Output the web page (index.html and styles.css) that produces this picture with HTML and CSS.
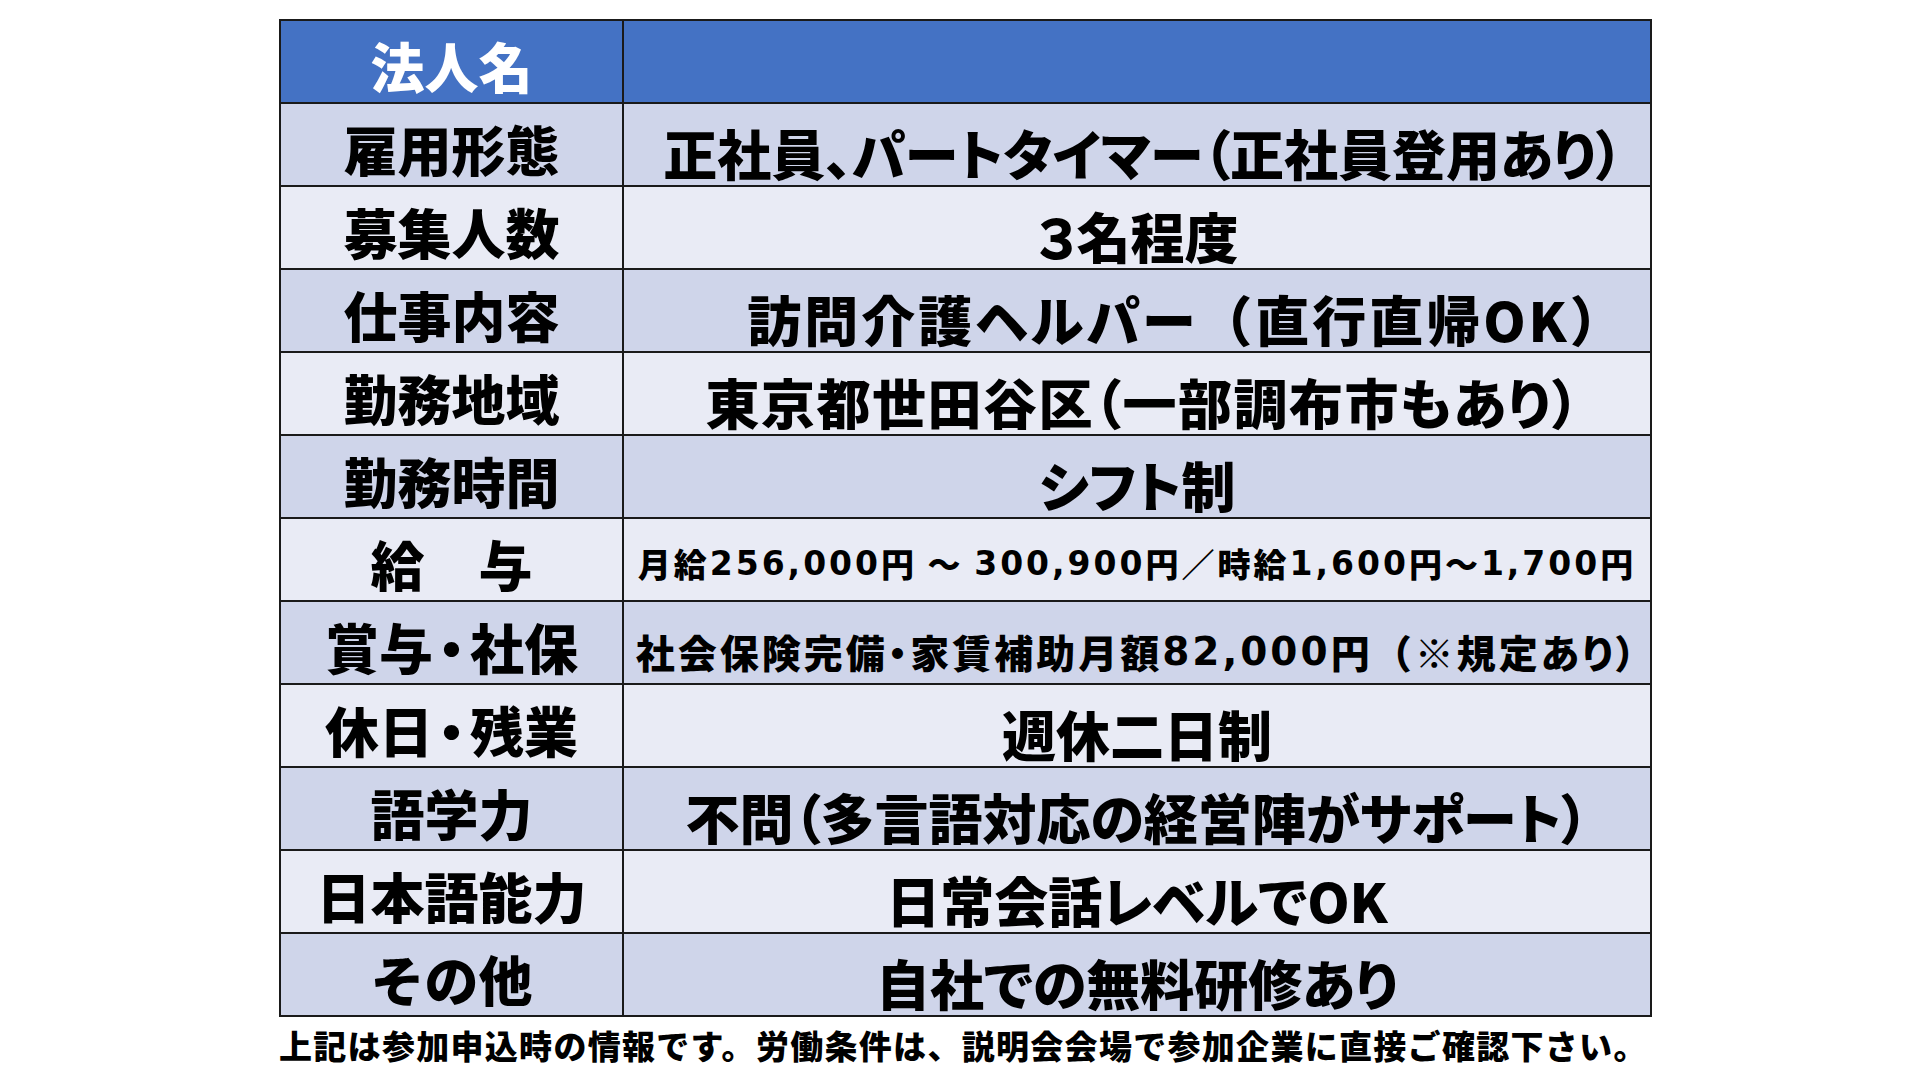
FILE: index.html
```html
<!DOCTYPE html>
<html lang="ja">
<head>
<meta charset="utf-8">
<title>募集要項</title>
<link rel="stylesheet" href="styles.css">
</head>
<body>
<main class="sheet">
  <div class="grid">
    <div class="cell head key">法人名</div>
    <div class="cell head val"></div>

    <div class="cell odd key">雇用形態</div>
    <div class="cell odd val nudge">正社員、パートタイマー（正社員登用あり）</div>

    <div class="cell even key">募集人数</div>
    <div class="cell even val">３名程度</div>

    <div class="cell odd key">仕事内容</div>
    <div class="cell odd val wide">訪問介護ヘルパー<span class="fw">（</span>直行直帰OK<span class="fw">）</span></div>

    <div class="cell even key">勤務地域</div>
    <div class="cell even val loose">東京都世田谷区（一部調布市もあり）</div>

    <div class="cell odd key">勤務時間</div>
    <div class="cell odd val">シフト制</div>

    <div class="cell even key">給　与</div>
    <div class="cell even val small">月給<span class="num">256,000</span>円 ～ <span class="num">300,900</span>円／時給<span class="num">1,600</span>円～<span class="num">1,700</span>円</div>

    <div class="cell odd key">賞与<span class="dot">・</span>社保</div>
    <div class="cell odd val mid">社会保険完備・家賃補助月額<span class="num">82,000</span>円<span class="fw">（</span>※規定あり）</div>

    <div class="cell even key">休日<span class="dot">・</span>残業</div>
    <div class="cell even val">週休二日制</div>

    <div class="cell odd key">語学力</div>
    <div class="cell odd val">不問（多言語対応の経営陣がサポート）</div>

    <div class="cell even key">日本語能力</div>
    <div class="cell even val">日常会話レベルでOK</div>

    <div class="cell odd key">その他</div>
    <div class="cell odd val">自社での無料研修あり</div>
  </div>
  <p class="note">上記は参加申込時の情報です。労働条件は、説明会会場で参加企業に直接ご確認下さい。</p>
</main>
</body>
</html>
```
FILE: styles.css
```css
html, body {
  margin: 0;
  padding: 0;
  background: #ffffff;
}

body {
  width: 1920px;
  height: 1080px;
  overflow: hidden;
  font-family: "Noto Sans CJK JP", "Noto Sans", sans-serif;
  color: #000000;
}

.sheet {
  padding-top: 19px;
  margin-left: 279px;
  width: 1373px;
}

.grid {
  display: grid;
  grid-template-columns: 341px 1026px;
  grid-auto-rows: 81px;
  gap: 2px;
  padding: 2px;
  background: #1a1a1a;
}

.cell {
  display: flex;
  align-items: center;
  justify-content: center;
  font-weight: 900;
  line-height: 1;
  white-space: pre;
  box-sizing: border-box;
}

.key {
  font-size: 54px;
  padding-top: 8px;
}

.dot {
  font-feature-settings: "palt";
  margin: 0 5px;
}

.val {
  font-size: 54px;
  padding-top: 16px;
  font-feature-settings: "palt";
}

.fw {
  font-feature-settings: normal;
}

.nudge {
  padding-left: 12px;
}

.wide {
  letter-spacing: 3px;
  padding-left: 100px;
}

.loose {
  letter-spacing: 1.5px;
  padding-left: 12px;
}

.head {
  background: #4472c4;
  color: #ffffff;
}

.odd {
  background: #cfd5ea;
}

.even {
  background: #e9ebf5;
}

.small {
  font-size: 33px;
  letter-spacing: 3px;
  padding-top: 8px;
  font-feature-settings: normal;
}

.mid {
  font-size: 39px;
  letter-spacing: 3px;
  padding-top: 18px;
}

.num {
  font-family: "DejaVu Sans", "Noto Sans CJK JP", sans-serif;
  font-weight: 700;
}

.note {
  margin: 8px 0 0 0;
  font-size: 33px;
  line-height: 40px;
  font-weight: 900;
  letter-spacing: 1.3px;
  white-space: nowrap;
}
```
